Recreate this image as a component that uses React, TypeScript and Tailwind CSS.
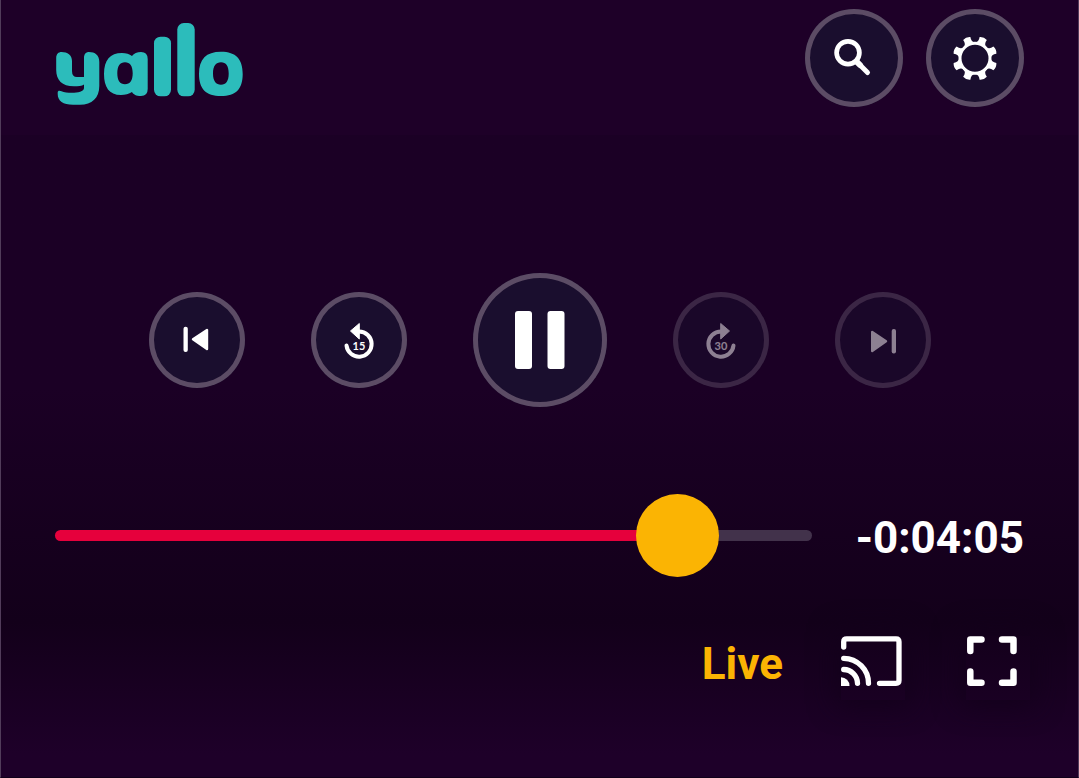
import { useState } from "react";
import type { CSSProperties, ReactNode } from "react";
import clsx from "clsx";

const DURATION = 1775;

const Logo = () => (
  <svg
    className="w-[188px] h-[82px]"
    viewBox="-1 0 188 82"
    fill="#2cbcbb"
    fillRule="evenodd"
    role="img"
    aria-label="yallo"
  >
    <path d="M.2 35C.2 31 2.500 29 5.500 29 11.500 29 16 32 16 38V48Q16 54 21 54H28V35C28 31 30 29 33 29 39 29 43.300 32 43.300 39V63C43.300 75 36 81.700 24 81.700H17C7 81.700 1.700 78 1.700 71V69.500C1.700 67.500 3.500 67.300 5.500 68.200 12 71 28 70.500 28 65V61.500C26 63 22 63.300 18 63.300 6 63.300.2 57 .2 47Z" />
    <path d="M76 33C78 30.500 81 29 85 29Q91.700 29 91.700 36V66Q91.700 73 85 73C80 73 77.500 71.500 76 69 73 71 69 72 65 72 53 72 48 64 48 51 48 37 54 30 66 30 70 30 73.500 31 76 33ZM69 39.300C64 39.300 61.300 43 61.300 50.300S64 61.300 69 61.300 76.700 57.600 76.700 50.300 74 39.300 69 39.300Z" />
    <rect x="98" y="13.7" width="17" height="59.6" rx="6.5" />
    <rect x="121.3" y="0" width="17.4" height="73.3" rx="6.5" />
    <path d="M165 28.700C180 28.700 186.700 36 186.700 51S180 73 165 73 143 66 143 51 150 28.700 165 28.700ZM165 39.300C160 39.300 157 43 157 50.500S160 61.700 165 61.700 172.700 58 172.700 50.500 170 39.300 165 39.300Z" />
  </svg>
);

const SearchIcon = () => (
  <svg viewBox="0 0 98 98" fill="none" stroke="white" strokeLinecap="round">
    <circle cx="43" cy="43.7" r="11.4" strokeWidth="4.7" />
    <path d="M52 53 62.500 63.500" strokeWidth="5" />
    <path d="M51.500 52.500 55 56" strokeWidth="6" />
  </svg>
);

const GearIcon = () => (
  <svg viewBox="0 0 98 98" fill="white">
    <circle cx="49" cy="49.3" r="15" fill="none" stroke="white" strokeWidth="3" />
    {[22.5, 67.5, 112.5, 157.5, 202.5, 247.5, 292.5, 337.5].map((angle) => (
      <path
        key={angle}
        transform={`translate(49 49.3) rotate(${angle})`}
        d="M-6.300-14.500Q-2.600-16.500-3.900-21.500 0-23.500 3.900-21.500 2.600-16.500 6.300-14.500Z"
      />
    ))}
  </svg>
);

const PreviousIcon = () => (
  <svg viewBox="0 0 96 96" fill="white">
    <rect x="34.5" y="34.7" width="4.3" height="25.3" rx="2" />
    <path
      d="M44 47.300 58 38V57Z"
      stroke="white"
      strokeWidth="2.4"
      strokeLinejoin="round"
    />
  </svg>
);

const NextIcon = () => (
  <svg viewBox="0 0 96 96" fill="white">
    <rect x="56.7" y="37" width="4.3" height="24.5" rx="2" />
    <path
      d="M51 49.300 37.200 40V59Z"
      stroke="white"
      strokeWidth="2.4"
      strokeLinejoin="round"
    />
  </svg>
);

const PauseIcon = () => (
  <svg viewBox="0 0 134 134" fill="white">
    <rect x="42" y="38" width="17" height="58" rx="3" />
    <rect x="74.5" y="38" width="17" height="58" rx="3" />
  </svg>
);

const SeekIcon = ({ seconds, forward }: { seconds: number; forward?: boolean }) => (
  <svg viewBox="0 0 96 96" fill="white">
    <g transform={forward ? "translate(96 0) scale(-1 1)" : undefined}>
      <path
        d="M48 39.500A12.600 12.600 0 1 1 35.500 53.500"
        fill="none"
        stroke="white"
        strokeWidth="4"
        strokeLinecap="round"
      />
      <path
        d="M39.500 39 48.300 31.500V47Z"
        stroke="white"
        strokeWidth="1"
        strokeLinejoin="round"
      />
    </g>
    <text
      x="48"
      y="58"
      textAnchor="middle"
      className="font-['Lato',sans-serif] text-[11px] font-bold"
    >
      {seconds}
    </text>
  </svg>
);

const CastIcon = () => (
  <svg
    className="w-16 h-16"
    viewBox="0 0 64 64"
    fill="none"
    stroke="white"
    strokeWidth="5.3"
    strokeLinecap="round"
  >
    <path d="M2.700 11V5.700Q2.700 2.800 5.700 2.800H55Q58 2.800 58 5.800V44.500Q58 47.300 55 47.300H38.500" />
    <path d="M2.700 22.300A25 25 0 0 1 27.500 47.300" />
    <path d="M2.700 33.500A14 14 0 0 1 16.500 47.300" />
    <path d="M0 41.300A8.500 8.500 0 0 1 8.500 50H0Z" fill="white" stroke="none" />
  </svg>
);

const FullscreenIcon = () => (
  <svg
    className="w-16 h-16"
    viewBox="0 0 64 64"
    fill="none"
    stroke="white"
    strokeWidth="6.5"
    strokeLinecap="round"
    strokeLinejoin="round"
  >
    <path d="M4.300 15V3.500H15.500M36 3.500H47.500V15M47.500 35.500V46.700H36M15.500 46.700H4.300V35.500" />
  </svg>
);

interface RoundButtonProps {
  label: string;
  size?: "md" | "header" | "lg";
  disabled?: boolean;
  children: ReactNode;
}

const RoundButton = ({ label, size = "md", disabled, children }: RoundButtonProps) => (
  <button
    type="button"
    aria-label={label}
    disabled={disabled}
    className={clsx(
      "shrink-0 rounded-full bg-[#1a0e2e] ring-[5px] ring-inset ring-[#5c4c65]",
      size === "md" && "w-24 h-24",
      size === "header" && "w-[98px] h-[98px]",
      size === "lg" && "w-[134px] h-[134px]",
      disabled && "opacity-50"
    )}
  >
    {children}
  </button>
);

const formatRemaining = (seconds: number) => {
  const h = Math.floor(seconds / 3600);
  const m = String(Math.floor((seconds % 3600) / 60)).padStart(2, "0");
  const s = String(seconds % 60).padStart(2, "0");
  return `-${h}:${m}:${s}`;
};

export default function App() {
  const [position, setPosition] = useState(1530);

  return (
    <main className="min-h-screen border-x border-b border-x-[#513c5a] border-b-[#10001a] bg-linear-to-b from-[#1b0025] from-50% via-[#13001a] via-80% to-[#1e0029] to-97% font-['Roboto',sans-serif]">
      <header className="flex items-start justify-between bg-[#1e0028] px-[54px] pt-[9px] pb-7">
        <div className="pt-3.5">
          <Logo />
        </div>
        <div className="flex gap-[23px]">
          <RoundButton label="Search" size="header">
            <SearchIcon />
          </RoundButton>
          <RoundButton label="Settings" size="header">
            <GearIcon />
          </RoundButton>
        </div>
      </header>

      <div className="flex items-center justify-center gap-[66px] pt-[138px]">
        <RoundButton label="Previous">
          <PreviousIcon />
        </RoundButton>
        <RoundButton label="Back 15 seconds">
          <SeekIcon seconds={15} />
        </RoundButton>
        <RoundButton label="Pause" size="lg">
          <PauseIcon />
        </RoundButton>
        <RoundButton label="Forward 30 seconds" disabled>
          <SeekIcon seconds={30} forward />
        </RoundButton>
        <RoundButton label="Next" disabled>
          <NextIcon />
        </RoundButton>
      </div>

      <div className="mt-[87px] flex items-center gap-11 px-[54px]">
        <input
          type="range"
          aria-label="Position"
          min={0}
          max={DURATION}
          value={position}
          onChange={(e) => setPosition(Number(e.target.value))}
          style={{ "--played": `${(position / DURATION) * 100}%` } as CSSProperties}
          className="h-[83px] min-w-0 flex-1 appearance-none bg-transparent [&::-webkit-slider-runnable-track]:h-[11px] [&::-webkit-slider-runnable-track]:rounded-full [&::-webkit-slider-runnable-track]:bg-[linear-gradient(to_right,#e6003c_var(--played),#42324b_var(--played))] [&::-webkit-slider-thumb]:-mt-9 [&::-webkit-slider-thumb]:h-[83px] [&::-webkit-slider-thumb]:w-[83px] [&::-webkit-slider-thumb]:appearance-none [&::-webkit-slider-thumb]:rounded-full [&::-webkit-slider-thumb]:bg-[#fbb403]"
        />
        <span className="pt-1 text-[44px] leading-[52px] font-bold text-white">
          {formatRemaining(DURATION - position)}
        </span>
      </div>

      <div className="mt-[59px] flex items-start justify-end pr-12 pb-[77px]">
        <button
          type="button"
          className="mr-[58px] pt-0.5 text-[44px] leading-[52px] font-bold text-[#fbb403]"
        >
          Live
        </button>
        <button
          type="button"
          aria-label="Cast"
          className="mr-[61px] shadow-[0_0_28px_4px_#13001b]"
        >
          <CastIcon />
        </button>
        <button
          type="button"
          aria-label="Fullscreen"
          className="shadow-[0_0_28px_4px_#13001b]"
        >
          <FullscreenIcon />
        </button>
      </div>
    </main>
  );
}
